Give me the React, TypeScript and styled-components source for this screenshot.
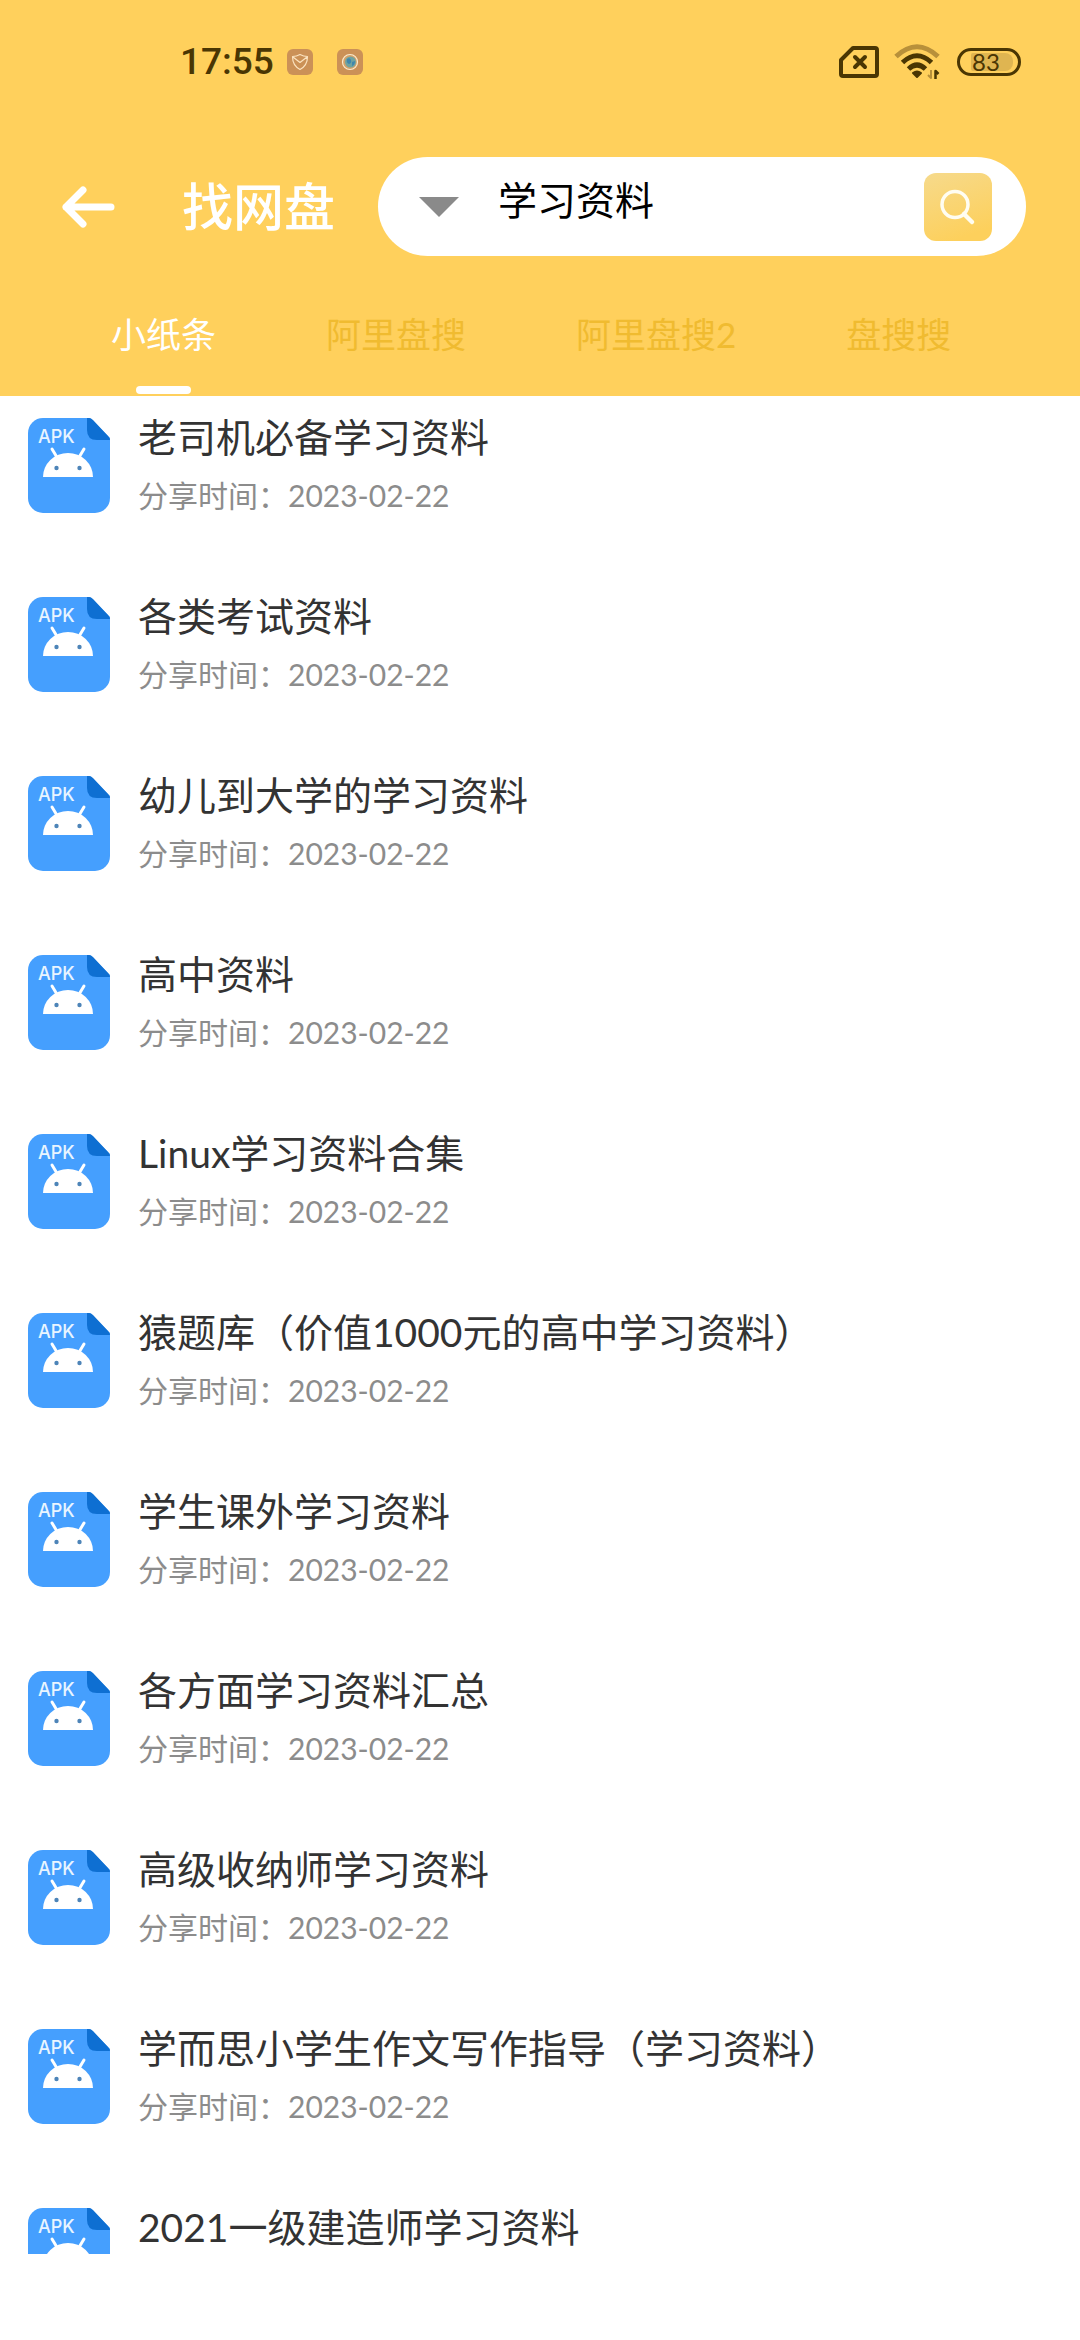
import React, { useState } from "react";
import styled, { createGlobalStyle } from "styled-components";

const color = {
  brand: "#ffd05c",
  statusInk: "#4a3603",
  tabIdle: "#f0bb30",
  title: "#333333",
  muted: "#8c8c8c",
};

const GlobalStyle = createGlobalStyle`
  *, *::before, *::after { box-sizing: border-box; }
  body {
    margin: 0;
    background: #fff;
    font-family: Lato, "Noto Sans CJK SC", sans-serif;
  }
  button, input { font: inherit; }
  button { border: 0; padding: 0; background: none; cursor: pointer; }
  svg { display: block; }
`;

const Screen = styled.div`
  display: flex;
  flex-direction: column;
  height: 100vh;
  padding-bottom: 86px;
  background: #fff;
`;

const Header = styled.header`
  flex: none;
  background: ${color.brand};
`;

const StatusBar = styled.div`
  display: flex;
  align-items: center;
  justify-content: space-between;
  height: 124px;
  padding: 0 59px 0 180px;
  color: ${color.statusInk};
`;

const StatusGroup = styled.div<{ $gap: number }>`
  display: flex;
  align-items: center;
  gap: ${(p) => p.$gap}px;
`;

const Clock = styled.time`
  margin-right: -11px;
  font-family: Roboto, sans-serif;
  font-size: 37px;
  font-weight: 500;
  line-height: 48px;
`;

const Battery = styled.div`
  display: flex;
  align-items: center;
  width: 64px;
  height: 28px;
  padding: 0 4px 0 11px;
  border: 3px solid ${color.statusInk};
  border-radius: 14px;
`;

const BatteryFill = styled.div`
  display: flex;
  align-items: center;
  width: 42px;
  height: 18px;
  padding-left: 1px;
  border-radius: 2px 8px 8px 2px;
  background: #dfb551;
  font-size: 24px;
  line-height: 18px;
`;

const TitleRow = styled.div`
  display: flex;
  align-items: center;
  padding: 33px 54px 0 60px;
`;

const BackButton = styled.button`
  flex: none;
  width: 56px;
  height: 56px;
`;

const AppTitle = styled.h1`
  flex: none;
  margin: 0 43px 0 66px;
  color: #fff;
  font-size: 51px;
  font-weight: 500;
  line-height: 72px;
`;

const SearchForm = styled.form`
  display: flex;
  flex: 1;
  align-items: center;
  min-width: 0;
  height: 99px;
  padding: 0 34px 0 41px;
  border-radius: 50px;
  background: #fff;
`;

const DropButton = styled.button`
  flex: none;
  width: 40px;
  height: 40px;
`;

const SearchInput = styled.input`
  flex: 1;
  min-width: 0;
  height: 99px;
  margin-left: 39px;
  padding: 0 0 18px;
  border: 0;
  outline: 0;
  background: transparent;
  color: #000;
  font-size: 39px;
`;

const SearchButton = styled.button`
  display: grid;
  flex: none;
  place-items: center;
  width: 68px;
  height: 68px;
  border-radius: 12px;
  background: linear-gradient(160deg, #f6da8c, #fdd05c 85%);
`;

const Tabs = styled.div`
  display: flex;
  padding: 0 56px;
`;

const Tab = styled.button<{ $active: boolean }>`
  display: flex;
  flex-direction: column;
  align-items: center;
  gap: 27px;
  padding: 53px 55px 2px;
  color: ${(p) => (p.$active ? "#fff" : color.tabIdle)};
  font-size: 35px;
  line-height: 50px;
  white-space: nowrap;

  &::after {
    content: "";
    width: 55px;
    height: 8px;
    border-radius: 4px;
    background: ${(p) => (p.$active ? "#fff" : "transparent")};
  }
`;

const Results = styled.ul`
  flex: 1;
  min-height: 0;
  margin: 0;
  padding: 0;
  overflow: hidden;
  list-style: none;
`;

const ResultLink = styled.a`
  display: flex;
  gap: 28px;
  height: 179px;
  padding: 22px 28px 0;
  color: inherit;
  text-decoration: none;
`;

const ResultText = styled.div`
  display: flex;
  flex-direction: column;
  gap: 12px;
  min-width: 0;
  margin-top: -7px;
`;

const ResultTitle = styled.span`
  overflow: hidden;
  color: ${color.title};
  font-size: 39px;
  line-height: 52px;
  text-overflow: ellipsis;
  white-space: nowrap;
`;

const ResultMeta = styled.span`
  color: ${color.muted};
  font-size: 30px;
  line-height: 40px;
`;

const FileSvg = styled.svg`
  flex: none;
  width: 82px;
  height: 95px;
`;

const ApkIcon = () => (
  <FileSvg viewBox="0 0 82 95" aria-hidden="true">
    <path d="M15 0H62L82 20V80A15 15 0 0 1 67 95H15A15 15 0 0 1 0 80V15A15 15 0 0 1 15 0Z" fill="#459ffe" />
    <path d="M59 0H61Q63 0 65 2L80 18Q82 20 82 22H69Q59 22 59 12Z" fill="#0e6fd2" />
    <text x="10" y="25" fill="#e9f5ff" fontFamily="Inter, sans-serif" fontSize="18" fontWeight="500">
      APK
    </text>
    <path d="M24 31L30 41M56 31L50 41" stroke="#fff" strokeWidth="3" strokeLinecap="round" />
    <path d="M15 59A25 24 0 0 1 65 59Z" fill="#fff" />
    <circle cx="28.500" cy="50" r="2.200" fill="#4d84b8" />
    <circle cx="51.500" cy="50" r="2.200" fill="#4d84b8" />
  </FileSvg>
);

const ShieldAppIcon = () => (
  <svg width="26" height="26" viewBox="0 0 26 26" fill="none" aria-hidden="true">
    <rect width="26" height="26" rx="6" fill="#cb9157" />
    <path d="M5.500 7.500Q9.500 7.500 13 5.500Q16.500 7.500 20.500 7.500Q20.500 16.500 13 20.500Q5.500 16.500 5.500 7.500ZM6 8L13 13.500L20 8" stroke="#fbe3c0" strokeWidth="1.200" strokeLinejoin="round" />
  </svg>
);

const GlobeAppIcon = () => (
  <svg width="26" height="26" viewBox="0 0 26 26" fill="none" aria-hidden="true">
    <rect width="26" height="26" rx="6" fill="#cb9157" />
    <circle cx="13" cy="13" r="7.500" fill="#d3a269" stroke="#fbe9cc" strokeWidth="1.200" />
    <circle cx="13.500" cy="13" r="5.500" fill="#6fa3a0" />
    <path d="M10 10Q13 8 14 11T12 15Q9 14 10 10ZM15 13L18 12Q18 16 15 17Z" fill="#3f87ad" />
  </svg>
);

const SimIcon = () => (
  <svg width="40" height="32" viewBox="0 0 40 32" fill="none" stroke={color.statusInk} aria-label="无 SIM 卡" role="img">
    <path d="M14 2H36Q38 2 38 4V28Q38 30 36 30H4Q2 30 2 28V14Z" strokeWidth="4" strokeLinejoin="round" />
    <path d="M16 11L26 21M26 11L16 21" strokeWidth="4" strokeLinecap="round" />
  </svg>
);

const WifiIcon = () => (
  <svg width="48" height="36" viewBox="0 0 48 36" fill="none" aria-label="WLAN" role="img">
    <path d="M2 12.500Q23 -7 44 12.500" stroke="#b8903a" strokeWidth="5" />
    <path d="M8.500 18.500Q23 5 37.500 18.500" stroke={color.statusInk} strokeWidth="5" />
    <path d="M14.500 25Q23 17 31.500 25" stroke={color.statusInk} strokeWidth="5" />
    <path d="M19 29Q23 26 27 29L23 33Z" fill={color.statusInk} stroke={color.statusInk} strokeWidth="2" strokeLinejoin="round" />
    <path d="M37 26V34L34 31" stroke="#b8903a" strokeWidth="2" strokeLinejoin="round" />
    <path d="M41.500 35V27L44.500 30" stroke={color.statusInk} strokeWidth="2.500" strokeLinejoin="round" />
  </svg>
);

const BackIcon = () => (
  <svg width="56" height="56" viewBox="0 0 56 56" fill="none" stroke="#fff" strokeWidth="7" strokeLinecap="round" strokeLinejoin="round" aria-hidden="true">
    <path d="M51 28H6M23 11L6 28L23 45" />
  </svg>
);

const CaretIcon = () => (
  <svg width="40" height="40" viewBox="0 0 40 40" aria-hidden="true">
    <path d="M0 10H40L20 30Z" fill="#8a8a8a" />
  </svg>
);

const SearchIcon = () => (
  <svg width="40" height="40" viewBox="0 0 40 40" fill="none" stroke="#fffdf2" aria-hidden="true">
    <circle cx="17" cy="17.500" r="13" strokeWidth="3.500" />
    <path d="M26 27L34 35" strokeWidth="4.500" strokeLinecap="round" />
  </svg>
);

const tabs = ["小纸条", "阿里盘搜", "阿里盘搜2", "盘搜搜"];

const results: { title: string; date?: string }[] = [
  { title: "老司机必备学习资料", date: "2023-02-22" },
  { title: "各类考试资料", date: "2023-02-22" },
  { title: "幼儿到大学的学习资料", date: "2023-02-22" },
  { title: "高中资料", date: "2023-02-22" },
  { title: "Linux学习资料合集", date: "2023-02-22" },
  { title: "猿题库（价值1000元的高中学习资料）", date: "2023-02-22" },
  { title: "学生课外学习资料", date: "2023-02-22" },
  { title: "各方面学习资料汇总", date: "2023-02-22" },
  { title: "高级收纳师学习资料", date: "2023-02-22" },
  { title: "学而思小学生作文写作指导（学习资料）", date: "2023-02-22" },
  { title: "2021一级建造师学习资料" },
];

export default function App() {
  const [query, setQuery] = useState("学习资料");
  const [active, setActive] = useState(0);

  return (
    <>
      <GlobalStyle />
      <Screen>
        <Header>
          <StatusBar>
            <StatusGroup $gap={24}>
              <Clock>17:55</Clock>
              <ShieldAppIcon />
              <GlobeAppIcon />
            </StatusGroup>
            <StatusGroup $gap={15}>
              <SimIcon />
              <WifiIcon />
              <Battery>
                <BatteryFill>83</BatteryFill>
              </Battery>
            </StatusGroup>
          </StatusBar>
          <TitleRow>
            <BackButton type="button" aria-label="返回">
              <BackIcon />
            </BackButton>
            <AppTitle>找网盘</AppTitle>
            <SearchForm role="search" onSubmit={(e) => e.preventDefault()}>
              <DropButton type="button" aria-label="选择来源">
                <CaretIcon />
              </DropButton>
              <SearchInput aria-label="搜索" value={query} onChange={(e) => setQuery(e.target.value)} />
              <SearchButton type="submit" aria-label="搜索">
                <SearchIcon />
              </SearchButton>
            </SearchForm>
          </TitleRow>
          <Tabs role="tablist">
            {tabs.map((name, i) => (
              <Tab key={name} type="button" role="tab" aria-selected={i === active} $active={i === active} onClick={() => setActive(i)}>
                {name}
              </Tab>
            ))}
          </Tabs>
        </Header>
        <Results>
          {results.map((item) => (
            <li key={item.title}>
              <ResultLink href="#">
                <ApkIcon />
                <ResultText>
                  <ResultTitle>{item.title}</ResultTitle>
                  {item.date && <ResultMeta>分享时间：{item.date}</ResultMeta>}
                </ResultText>
              </ResultLink>
            </li>
          ))}
        </Results>
      </Screen>
    </>
  );
}
